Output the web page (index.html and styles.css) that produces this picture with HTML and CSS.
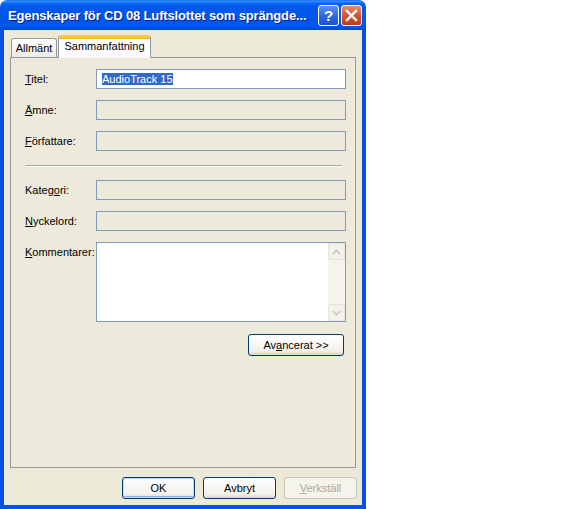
FILE: index.html
```html
<!DOCTYPE html>
<html>
<head>
  <meta charset="utf-8">
  <title>Egenskaper</title>
  <link rel="stylesheet" href="styles.css">
</head>
<body>

  <div class="window">
    <div class="titlebar">
      <span class="title">Egenskaper för CD 08 Luftslottet som sprängde...</span>
      <div class="caption-buttons">
        <span class="cbtn help">?</span>
        <span class="cbtn close">
          <svg width="13" height="13" viewBox="0 0 13 13"><path d="M2 2 L11 11 M11 2 L2 11" stroke="#fff" stroke-width="2.4" stroke-linecap="square"/></svg>
        </span>
      </div>
    </div>

    <div class="frame">
      <!-- tab strip -->
      <div class="tabs">
        <span class="tab">Allmänt</span>
        <span class="tab active">Sammanfattning</span>
      </div>

      <div class="panel">
        <div class="row">
          <label><u>T</u>itel:</label>
          <div class="field enabled"><span class="sel">AudioTrack 15</span></div>
        </div>
        <div class="row">
          <label><u>Ä</u>mne:</label>
          <div class="field"></div>
        </div>
        <div class="row">
          <label><u>F</u>örfattare:</label>
          <div class="field"></div>
        </div>

        <div class="sep"></div>

        <div class="row">
          <label>Kateg<u>o</u>ri:</label>
          <div class="field"></div>
        </div>
        <div class="row">
          <label><u>N</u>yckelord:</label>
          <div class="field"></div>
        </div>
        <div class="row">
          <label><u>K</u>ommentarer:</label>
          <div class="field memo">
            <div class="memo-text"></div>
            <!-- disabled vertical scrollbar -->
            <div class="vscroll">
              <span class="sbtn"><svg width="9" height="6" viewBox="0 0 9 6"><path d="M1 5 L4.5 1.5 L8 5" fill="none" stroke="#C9C7BA" stroke-width="1.6"/></svg></span>
              <span class="track"></span>
              <span class="sbtn"><svg width="9" height="6" viewBox="0 0 9 6"><path d="M1 1 L4.5 4.5 L8 1" fill="none" stroke="#C9C7BA" stroke-width="1.6"/></svg></span>
            </div>
          </div>
        </div>

        <div class="adv-row">
          <button class="btn adv">Av<u>a</u>ncerat &gt;&gt;</button>
        </div>
      </div>

      <div class="buttons">
        <button class="btn default">OK</button>
        <button class="btn">Avbryt</button>
        <button class="btn disabled"><u>V</u>erkställ</button>
      </div>
    </div>
  </div>

</body>
</html>
```

FILE: styles.css
```css
* {
  box-sizing: border-box;
}

body {
  margin: 0;
  background-color: #ffffff;
  font-family: "Liberation Sans", Arial, sans-serif;
  font-size: 11px;
  color: #000000;
}

.window {
  width: 366px;
  height: 509px;
  display: flex;
  flex-direction: column;
}

/* Blue caption bar */

.titlebar {
  height: 30px;
  flex: none;
  display: flex;
  align-items: center;
  padding: 0 4px 0 8px;
  border-radius: 7px 7px 0 0;
  background: linear-gradient(to bottom, #0A5FE4 0, #3D95FF 1px, #0A6BF5 3px, #0058EE 6px, #0055E5 20px, #0058EE 26px, #0047C9 30px);
}

.title {
  flex: 1;
  color: #ffffff;
  font-weight: bold;
  font-size: 13px;
  letter-spacing: -0.15px;
  white-space: nowrap;
  text-shadow: 1px 1px #0A1E8A;
}

.caption-buttons {
  display: flex;
  gap: 2px;
  margin-top: 1px;
}

.cbtn {
  width: 21px;
  height: 21px;
  border: 1px solid #ffffff;
  border-radius: 3px;
  display: flex;
  align-items: center;
  justify-content: center;
}

.help {
  background: linear-gradient(to bottom, #5A8FF5, #2A62E0 60%, #1E4FD0);
  color: #ffffff;
  font-weight: bold;
  font-size: 15px;
}

.close {
  background: linear-gradient(to bottom, #EC8A6B, #D4502C 55%, #C03A17);
}

/* Dialog body */

.frame {
  flex: 1;
  display: flex;
  flex-direction: column;
  border: 4px solid #0B4EE4;
  border-top: 0;
  background-color: #ECE9D8;
  padding: 5px 6px 6px 6px;
}

.tabs {
  display: flex;
  align-items: flex-end;
  height: 22px;
  padding-left: 1px;
}

.tab {
  width: 46px;
  height: 19px;
  border: 1px solid #919B9C;
  border-bottom: none;
  border-radius: 3px 3px 0 0;
  background: linear-gradient(to bottom, #ffffff, #ECEBE5);
  line-height: 18px;
  text-align: center;
}

.tab.active {
  width: 93px;
  height: 23px;
  margin-bottom: -1px;
  margin-left: 1px;
  position: relative;
  z-index: 1;
  border-top: 3px solid #FFC83C;
  box-shadow: inset 0 1px 0 #F5B33A;
  background-color: #FCFCFE;
  background-image: none;
  line-height: 17px;
}

.panel {
  flex: 1;
  border: 1px solid #919B9C;
  background-color: #EDEADB;
  padding: 11px 9px 0 14px;
}

.row {
  display: flex;
  margin-bottom: 11px;
}

.row label {
  width: 71px;
  flex: none;
  line-height: 20px;
}

.field {
  width: 250px;
  height: 20px;
  border: 1px solid #7F9DB9;
  padding: 2px 5px;
  line-height: 14px;
}

.field.enabled {
  background-color: #ffffff;
}

.sel {
  background-color: #316AC5;
  color: #ffffff;
}

.sep {
  width: 317px;
  height: 2px;
  border-top: 1px solid #ACA899;
  border-bottom: 1px solid #ffffff;
  margin: 14px 0 13px 0;
}

.field.memo {
  height: 80px;
  padding: 0;
  display: flex;
  background-color: #ffffff;
}

.memo-text {
  flex: 1;
}

.vscroll {
  width: 17px;
  display: flex;
  flex-direction: column;
  background-color: #F4F3EC;
}

.sbtn {
  height: 17px;
  display: flex;
  align-items: center;
  justify-content: center;
  border: 1px solid #E6E4DA;
  border-radius: 2px;
  background-color: #F3F2EA;
}

.track {
  flex: 1;
}

.adv-row {
  display: flex;
  justify-content: flex-end;
  margin-top: 12px;
  padding-right: 2px;
}

/* XP push buttons */

.btn {
  width: 73px;
  height: 22px;
  padding: 0;
  border: 1px solid #003C74;
  border-radius: 3px;
  background: linear-gradient(to bottom, #ffffff, #F2F1EC 80%, #D8D3C8);
  font-family: inherit;
  font-size: 11px;
  color: #000000;
}

.btn.adv {
  width: 96px;
}

.btn.default {
  box-shadow: inset 0 0 0 1px #C4DAF8, inset 0 -2px 0 #8CB0E8;
}

.btn.disabled {
  border-color: #C9C7BA;
  background: #F5F4EA;
  color: #ACA899;
}

.buttons {
  display: flex;
  justify-content: flex-end;
  gap: 8px;
  margin-top: 9px;
  margin-right: -1px;
}
```
